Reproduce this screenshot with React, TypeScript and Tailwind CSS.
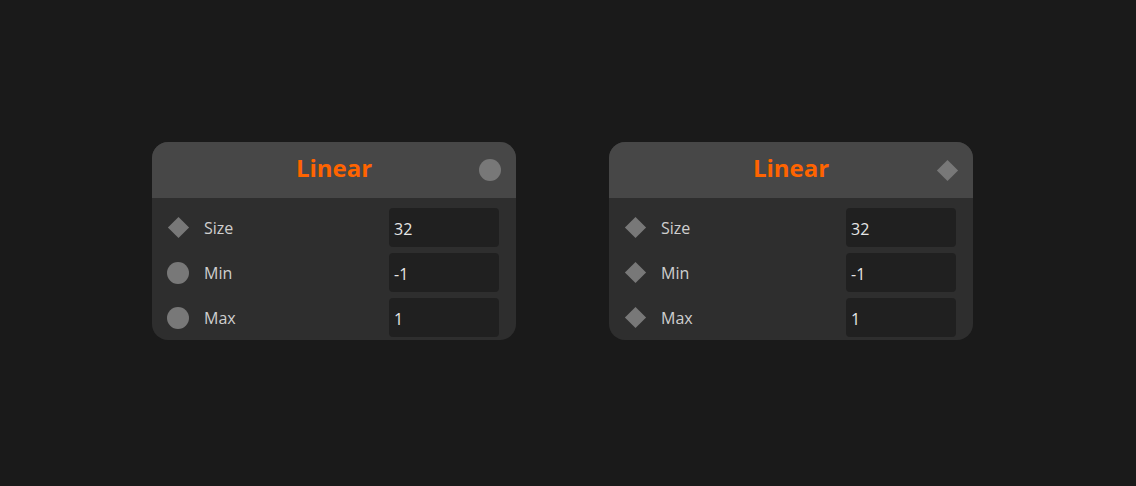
import React from 'react';

type Pin = 'circle' | 'diamond';

const FONT = { fontFamily: '"Open Sans", "Noto Sans", sans-serif' };

function PinIcon({ kind }: { kind: Pin }) {
  if (kind === 'circle') return <div className="w-[22px] h-[22px] rounded-full bg-[#787878]" />;
  return (
    <div className="w-[22px] h-[22px] flex items-center justify-center">
      <div className="w-[15px] h-[15px] rotate-45 bg-[#787878]" />
    </div>
  );
}

const ROWS = [
  { label: 'Size', value: '32' },
  { label: 'Min', value: '-1' },
  { label: 'Max', value: '1' },
];

function Node({ out, pins }: { out: Pin; pins: Pin[] }) {
  return (
    <div className="w-[364px] rounded-[16px] overflow-hidden bg-[#2e2e2e]">
      <div className="relative h-[56px] bg-[#474747] flex items-center justify-center pb-[4px]">
        <span className="text-[24px] leading-none font-bold text-[#ff6400]">Linear</span>
        <div className="absolute right-[15px] top-[17px]">
          <PinIcon kind={out} />
        </div>
      </div>
      <div className="pt-[10px] pb-[3px] pl-[15px] pr-[17px] flex flex-col gap-[6px]">
        {ROWS.map((r, i) => (
          <div key={r.label} className="flex items-center h-[39px]">
            <PinIcon kind={pins[i]} />
            <span className="ml-[15px] text-[16px] text-[#cfcfcf] flex-1">{r.label}</span>
            <div className="w-[110px] h-[39px] rounded-[4px] bg-[#202020] flex items-center pl-[5px] pt-[2px] text-[16px] text-[#e6e6e6]">
              {r.value}
            </div>
          </div>
        ))}
      </div>
    </div>
  );
}

export default function App() {
  return (
    <div className="w-full h-screen bg-[#1a1a1a] flex items-start pt-[142px] pl-[152px] gap-[93px]" style={FONT}>
      <Node out="circle" pins={['diamond', 'circle', 'circle']} />
      <Node out="diamond" pins={['diamond', 'diamond', 'diamond']} />
    </div>
  );
}
